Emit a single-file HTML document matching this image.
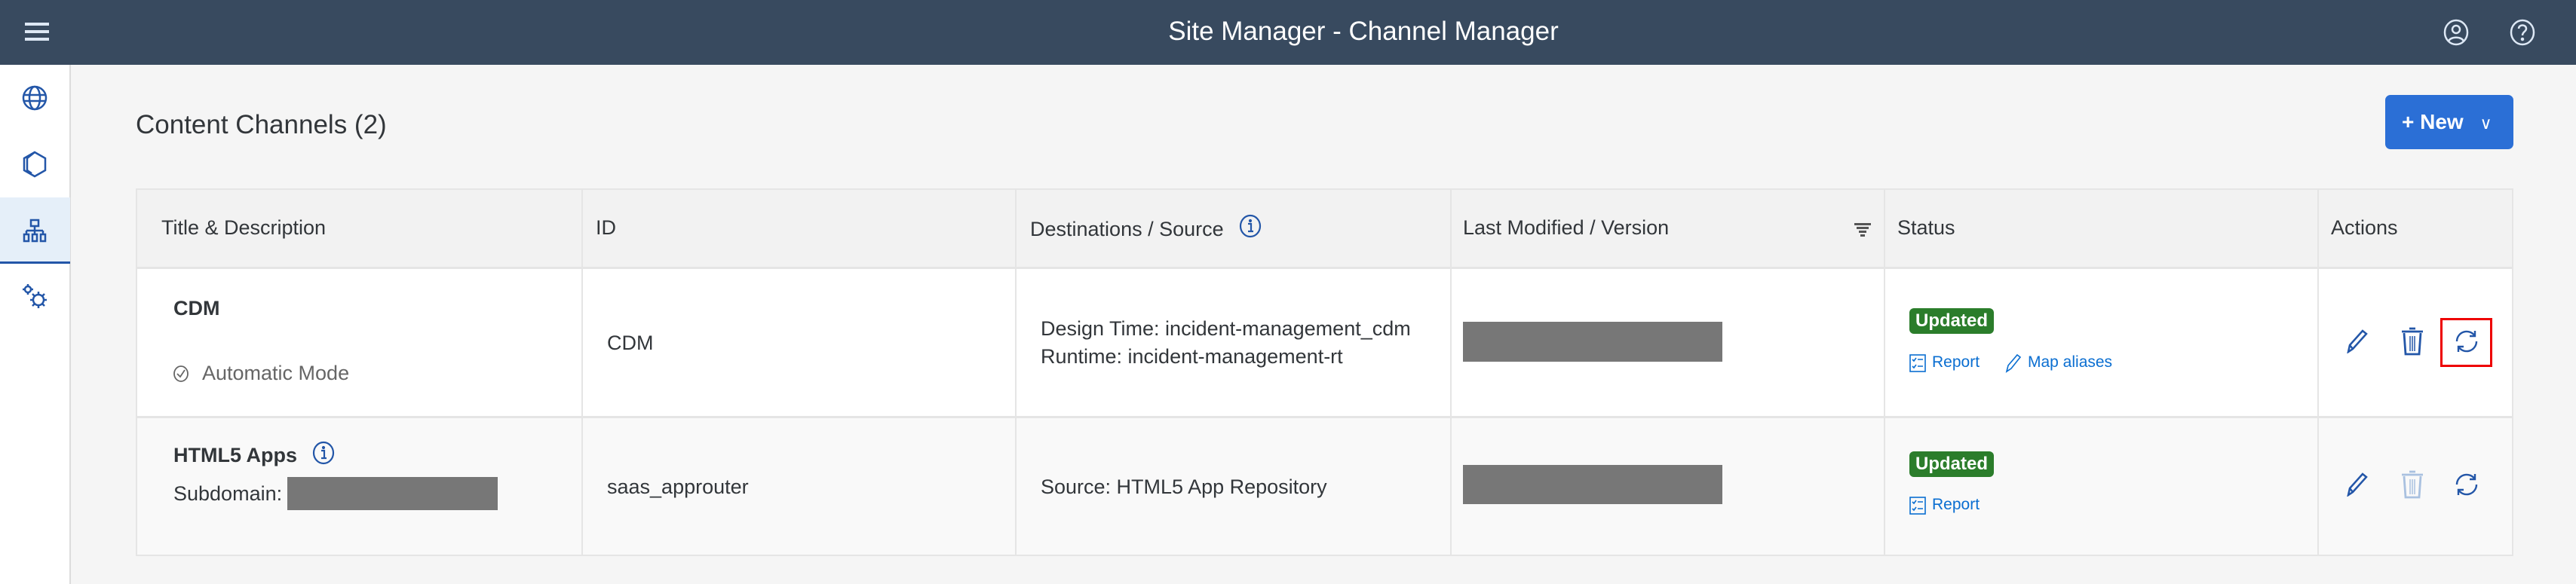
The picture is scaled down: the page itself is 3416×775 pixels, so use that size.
<!DOCTYPE html>
<html><head><meta charset="utf-8"><style>
*{margin:0;padding:0;box-sizing:border-box}
body{width:3416px;height:775px;overflow:hidden;background:#f5f5f5;font-family:"Liberation Sans",sans-serif;color:#32363a;position:relative}
.a{position:absolute}
.hdr{left:0;top:0;width:3416px;height:86px;background:#384a5f}
.side{left:0;top:86px;width:94px;height:689px;background:#fff;border-right:2px solid #dcdcdc}
.t{font-size:27px;white-space:nowrap}
.vl{width:2px;background:#e5e5e5}
.gray{background:#777}
.badge{background:#2b7d2b;color:#fff;font-weight:bold;font-size:24px;border-radius:6px;text-align:center;line-height:34px}
.link{color:#0a6ed1;font-size:21px}
</style></head><body>
<div class="a hdr"></div>
<div class="a" style="left:33px;top:30px;width:32px;height:4px;background:#dde8f5;box-shadow:0 10px 0 #dde8f5,0 20px 0 #dde8f5"></div>
<div class="a" style="left:0;top:22px;width:3616px;text-align:center;color:#fff;font-size:35px">Site Manager - Channel Manager</div>
<svg class="a" style="left:3240px;top:25px" width="34" height="36" viewBox="0 0 34 36" fill="none" stroke="#dde8f5" stroke-width="2.5"><ellipse cx="17" cy="18" rx="15" ry="16"/><circle cx="17" cy="14" r="5"/><path d="M7 30c2-7 18-7 20 0"/></svg>
<svg class="a" style="left:3328px;top:25px" width="34" height="36" viewBox="0 0 34 36" fill="none" stroke="#dde8f5" stroke-width="2.5"><ellipse cx="17" cy="18" rx="15" ry="16"/><path d="M12 13c0-6 10-6 10 0c0 4-5 4-5 9"/><circle cx="17" cy="27" r="1" fill="#dde8f5"/></svg>

<div class="a side"></div>
<svg class="a" style="left:29px;top:113px" width="34" height="34" viewBox="0 0 34 34" fill="none" stroke="#2356a8" stroke-width="2.5"><circle cx="17" cy="17" r="15"/><ellipse cx="17" cy="17" rx="7" ry="15"/><path d="M2 13h30M2 21h30"/></svg>
<svg class="a" style="left:30px;top:200px" width="32" height="36" viewBox="0 0 32 36" fill="none" stroke="#2356a8" stroke-width="2.5"><path d="M16 2L30 10V26L16 34L2 26V10Z"/><path d="M16 2L6 10V26L12 30"/></svg>
<div class="a" style="left:0;top:262px;width:93px;height:88px;background:#e5eff9;border-bottom:3px solid #2356a8"></div>
<svg class="a" style="left:30px;top:290px" width="32" height="32" viewBox="0 0 32 32" fill="none" stroke="#2356a8" stroke-width="2.5"><rect x="11" y="2" width="10" height="8"/><path d="M16 10v6M5 16h22M5 16v5M16 16v5M27 16v5"/><rect x="2" y="21" width="6" height="9"/><rect x="13" y="21" width="6" height="9"/><rect x="24" y="21" width="6" height="9"/></svg>
<svg class="a" style="left:28px;top:375px" width="36" height="36" viewBox="0 0 36 36" fill="none" stroke="#2356a8" stroke-width="2.5"><circle cx="9" cy="9" r="4"/><path d="M9 2v3M9 13v3M2 9h3M13 9h3"/><circle cx="23" cy="23" r="7"/><path d="M23 12v4M23 30v4M12 23h4M30 23h4M15 15l3 3M28 28l3 3M15 31l3-3M28 18l3-3"/></svg>

<div class="a" style="left:180px;top:146px;font-size:35px">Content Channels (2)</div>
<div class="a" style="left:3163px;top:126px;width:170px;height:72px;background:#2b6fd6;border-radius:7px;color:#fff;font-weight:bold;font-size:28px;line-height:72px;padding-left:22px">+ New <span style="font-weight:normal;font-size:22px;margin-left:14px">&#8744;</span></div>

<!-- table -->
<div class="a" style="left:180px;top:250px;width:3153px;height:488px;background:#fff;border:2px solid #e5e5e5"></div>
<div class="a" style="left:182px;top:252px;width:3149px;height:105px;background:#f2f2f2;border-bottom:3px solid #e5e5e5"></div>
<div class="a" style="left:182px;top:552px;width:3149px;height:184px;background:#f9f9f9;border-top:3px solid #e5e5e5"></div>
<div class="a vl" style="left:771px;top:252px;height:484px"></div>
<div class="a vl" style="left:1346px;top:252px;height:484px"></div>
<div class="a vl" style="left:1923px;top:252px;height:484px"></div>
<div class="a vl" style="left:2498px;top:252px;height:484px"></div>
<div class="a vl" style="left:3073px;top:252px;height:484px"></div>

<div class="a t" style="left:214px;top:287px">Title &amp; Description</div>
<div class="a t" style="left:790px;top:287px">ID</div>
<div class="a t" style="left:1366px;top:289px">Destinations / Source</div>
<svg class="a" style="left:1642px;top:283px" width="32" height="34" viewBox="0 0 32 34" fill="none" stroke="#2356a8" stroke-width="2.2"><ellipse cx="16" cy="17" rx="13" ry="14"/><path d="M13 14h4v10M13 24h7"/><circle cx="16" cy="10" r="1" fill="#2356a8"/></svg>
<div class="a t" style="left:1940px;top:287px">Last Modified / Version</div>
<svg class="a" style="left:2459px;top:296px" width="22" height="18" viewBox="0 0 22 18" fill="#555"><rect x="0" y="0" width="22" height="3"/><rect x="3" y="5" width="16" height="3"/><rect x="6" y="10" width="10" height="3"/><rect x="8" y="15" width="6" height="3"/></svg>
<div class="a t" style="left:2516px;top:287px">Status</div>
<div class="a t" style="left:3091px;top:287px">Actions</div>

<!-- row1 -->
<div class="a t" style="left:230px;top:394px;font-weight:bold">CDM</div>
<svg class="a" style="left:229px;top:484px" width="22" height="24" viewBox="0 0 22 24" fill="none" stroke="#666" stroke-width="1.8"><ellipse cx="11" cy="12" rx="9" ry="10"/><path d="M6 12l4 4 6-9"/></svg>
<div class="a t" style="left:268px;top:480px;color:#666">Automatic Mode</div>
<div class="a t" style="left:805px;top:440px">CDM</div>
<div class="a t" style="left:1380px;top:421px">Design Time: incident-management_cdm</div>
<div class="a t" style="left:1380px;top:458px">Runtime: incident-management-rt</div>
<div class="a gray" style="left:1940px;top:427px;width:344px;height:53px"></div>
<div class="a badge" style="left:2532px;top:409px;width:112px;height:34px">Updated</div>
<svg class="a" style="left:2532px;top:470px" width="22" height="24" viewBox="0 0 22 24" fill="none" stroke="#0a6ed1" stroke-width="1.6"><rect x="1" y="1" width="20" height="22"/><path d="M4 7l2 2 3-4M11 7h7M4 16l2 2 3-4M11 16h7"/></svg>
<div class="a link" style="left:2562px;top:469px">Report</div>
<svg class="a" style="left:2659px;top:469px" width="22" height="26" viewBox="0 0 22 26" fill="none" stroke="#0a6ed1" stroke-width="1.6"><path d="M2 24l2-8L16 2l4 3L8 20Z"/></svg>
<div class="a link" style="left:2689px;top:469px">Map aliases</div>
<svg class="a" style="left:3111px;top:437px" width="30" height="32" viewBox="0 0 30 32" fill="none" stroke="#2356a8" stroke-width="2.5"><path d="M3 30l2-9L22 2l5 4L9 26Z"/><path d="M5 21l4 5"/></svg>
<svg class="a" style="left:3184px;top:434px" width="30" height="38" viewBox="0 0 30 38" fill="none" stroke="#2356a8" stroke-width="2.8"><path d="M1 6h28M11 2h8"/><path d="M4 8l2 28h18l2-28"/><path d="M12 12v20M15 12v20M18 12v20" stroke-width="1.5"/></svg>
<svg class="a" style="left:3254px;top:436px" width="34" height="34" viewBox="0 0 34 34" fill="none" stroke="#2356a8" stroke-width="2.4"><path d="M4 17A13 13 0 0 1 28 10"/><path d="M28 3v7h-7"/><path d="M30 17A13 13 0 0 1 6 24"/><path d="M6 31v-7h7"/></svg>
<div class="a" style="left:3236px;top:422px;width:69px;height:65px;border:3px solid #e00"></div>

<!-- row2 -->
<div class="a t" style="left:230px;top:589px;font-weight:bold">HTML5 Apps</div>
<svg class="a" style="left:413px;top:584px" width="32" height="34" viewBox="0 0 32 34" fill="none" stroke="#2356a8" stroke-width="2.2"><ellipse cx="16" cy="17" rx="13" ry="14"/><path d="M13 14h4v10M13 24h7"/><circle cx="16" cy="10" r="1" fill="#2356a8"/></svg>
<div class="a t" style="left:230px;top:640px">Subdomain:</div>
<div class="a gray" style="left:381px;top:633px;width:279px;height:44px"></div>
<div class="a t" style="left:805px;top:631px">saas_approuter</div>
<div class="a t" style="left:1380px;top:631px">Source: HTML5 App Repository</div>
<div class="a gray" style="left:1940px;top:617px;width:344px;height:52px"></div>
<div class="a badge" style="left:2532px;top:599px;width:112px;height:34px">Updated</div>
<svg class="a" style="left:2532px;top:659px" width="22" height="24" viewBox="0 0 22 24" fill="none" stroke="#0a6ed1" stroke-width="1.6"><rect x="1" y="1" width="20" height="22"/><path d="M4 7l2 2 3-4M11 7h7M4 16l2 2 3-4M11 16h7"/></svg>
<div class="a link" style="left:2562px;top:658px">Report</div>
<svg class="a" style="left:3111px;top:627px" width="30" height="32" viewBox="0 0 30 32" fill="none" stroke="#2356a8" stroke-width="2.5"><path d="M3 30l2-9L22 2l5 4L9 26Z"/><path d="M5 21l4 5"/></svg>
<svg class="a" style="left:3184px;top:624px" width="30" height="38" viewBox="0 0 30 38" fill="none" stroke="#a9c1e0" stroke-width="2.8"><path d="M1 6h28M11 2h8"/><path d="M4 8l2 28h18l2-28"/><path d="M12 12v20M15 12v20M18 12v20" stroke-width="1.5"/></svg>
<svg class="a" style="left:3254px;top:626px" width="34" height="34" viewBox="0 0 34 34" fill="none" stroke="#2356a8" stroke-width="2.4"><path d="M4 17A13 13 0 0 1 28 10"/><path d="M28 3v7h-7"/><path d="M30 17A13 13 0 0 1 6 24"/><path d="M6 31v-7h7"/></svg>
</body></html>
